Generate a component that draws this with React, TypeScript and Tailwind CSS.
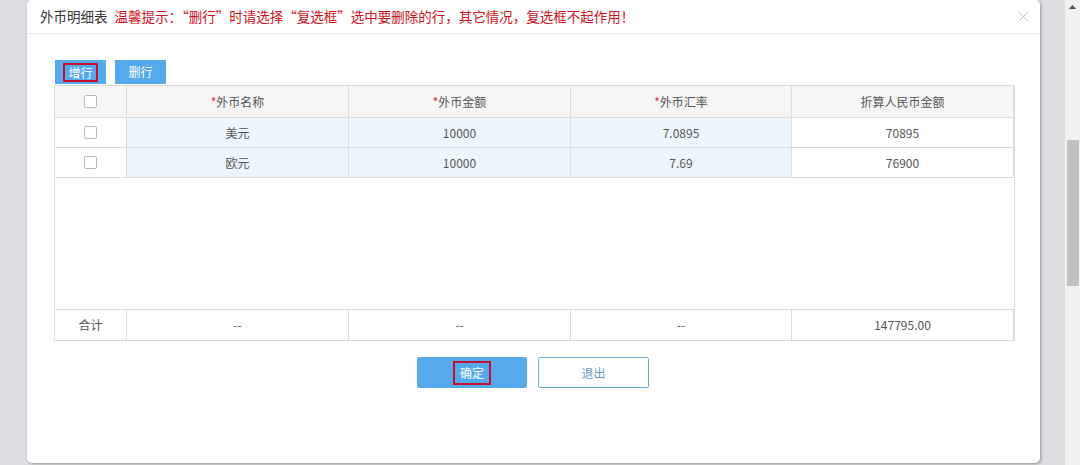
import { X } from 'lucide-react';

const rows = [
  { name: '美元', amount: '10000', rate: '7.0895', rmb: '70895' },
  { name: '欧元', amount: '10000', rate: '7.69', rmb: '76900' },
];

const cols = ['w-[72px]', 'w-[222px]', 'w-[222px]', 'w-[221px]', 'w-[222px]'];

function Checkbox() {
  return <span className="inline-block w-[13px] h-[13px] border border-[#b8b8b8] rounded-[2px] bg-white" />;
}

export default function App() {
  return (
    <div
      className="w-[1080px] h-[465px] bg-[#dcdde0] flex overflow-hidden text-[#555]"
      style={{ fontFamily: '"Noto Sans CJK SC", "Noto Sans", sans-serif' }}
    >
      <div className="w-[27px] shrink-0" />
      <div className="w-[1013px] h-[463px] shrink-0 bg-white rounded-[5px] shadow-[1px_1px_3px_rgba(0,0,0,0.35)] flex flex-col">
        <div className="h-[34px] border-b border-[#e8e8e8] flex items-center pl-[13px] pr-[7px] text-[13.5px]">
          <span className="text-[#333]">外币明细表</span>
          <span className="ml-[7px] text-[#d0121b]">温馨提示：“删行”时请选择“复选框”选中要删除的行，其它情况，复选框不起作用！</span>
          <X className="ml-auto w-[19px] h-[19px] text-[#b0b0b0]" strokeWidth={1} />
        </div>

        <div className="pl-[27px] pt-[26px]">
          <div className="flex gap-[9px] pl-[1px] text-[12px] text-white">
            <button className="w-[51px] h-[24px] bg-[#55aaee] flex items-center justify-center">
              <span className="px-[3px] border-2 border-[#c8102e] leading-[15px]">增行</span>
            </button>
            <button className="w-[51px] h-[24px] bg-[#55aaee] flex items-center justify-center">删行</button>
          </div>

          <div className="mt-[1px] w-[961px] h-[256px] border border-[#dcdcdc] flex flex-col text-[12px]">
            <div className="flex h-[32px] bg-[#f5f5f5] border-b border-[#dcdcdc] w-[959px]">
              <div className={`${cols[0]} border-r border-[#dcdcdc] flex items-center justify-center`}>
                <Checkbox />
              </div>
              {['外币名称', '外币金额', '外币汇率'].map((h, i) => (
                <div key={h} className={`${cols[i + 1]} border-r border-[#dcdcdc] flex items-center justify-center`}>
                  <span className="text-[#e03030]">*</span>
                  {h}
                </div>
              ))}
              <div className={`${cols[4]} border-r border-[#dcdcdc] flex items-center justify-center`}>折算人民币金额</div>
            </div>

            {rows.map((r) => (
              <div key={r.name} className="flex h-[30px] border-b border-[#dcdcdc] w-[959px]">
                <div className={`${cols[0]} border-r border-[#dcdcdc] flex items-center justify-center`}>
                  <Checkbox />
                </div>
                <div className={`${cols[1]} bg-[#eef6fd] border-r border-[#dcdcdc] flex items-center justify-center`}>{r.name}</div>
                <div className={`${cols[2]} bg-[#eef6fd] border-r border-[#dcdcdc] flex items-center justify-center`}>{r.amount}</div>
                <div className={`${cols[3]} bg-[#eef6fd] border-r border-[#dcdcdc] flex items-center justify-center`}>{r.rate}</div>
                <div className={`${cols[4]} border-r border-[#dcdcdc] flex items-center justify-center`}>{r.rmb}</div>
              </div>
            ))}

            <div className="flex-1" />

            <div className="flex h-[31px] border-t border-[#dcdcdc] w-[959px]">
              <div className={`${cols[0]} border-r border-[#dcdcdc] flex items-center justify-center`}>合计</div>
              <div className={`${cols[1]} border-r border-[#dcdcdc] flex items-center justify-center`}>--</div>
              <div className={`${cols[2]} border-r border-[#dcdcdc] flex items-center justify-center`}>--</div>
              <div className={`${cols[3]} border-r border-[#dcdcdc] flex items-center justify-center`}>--</div>
              <div className={`${cols[4]} border-r border-[#dcdcdc] flex items-center justify-center`}>147795.00</div>
            </div>
          </div>
        </div>

        <div className="mt-[16px] flex justify-center gap-[11px] pr-[1px] text-[12px]">
          <button className="w-[110px] h-[31px] bg-[#55aaee] text-white rounded-[2px] flex items-center justify-center">
            <span className="px-[5px] border-2 border-[#c8102e] leading-[20px]">确定</span>
          </button>
          <button className="w-[111px] h-[31px] bg-white border border-[#6aaedd] text-[#6a9cc4] rounded-[2px]">退出</button>
        </div>
      </div>
      <div className="w-[25px] shrink-0" />
      <div className="w-[15px] shrink-0 h-full bg-[#f1f1f1] flex flex-col items-center">
        <svg width="7" height="4" viewBox="0 0 7 4" className="mt-[5px]">
          <path d="M3.5 0 L7 4 L0 4 Z" fill="#505050" />
        </svg>
        <div className="mt-[131px] w-[12px] ml-[1px] h-[146px] bg-[#c1c1c1]" />
      </div>
    </div>
  );
}
